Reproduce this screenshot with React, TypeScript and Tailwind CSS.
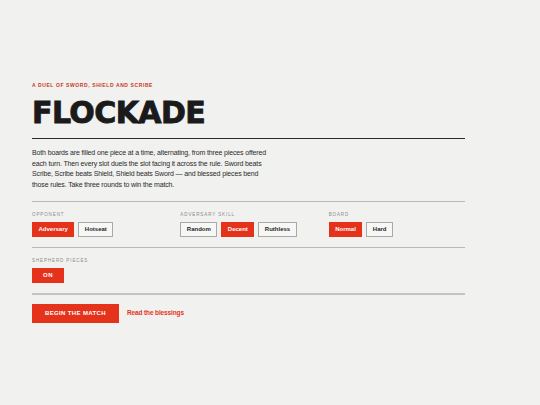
import { useState } from 'react'

type Option = { id: string; label: string }

const opponents: Option[] = [
  { id: 'adversary', label: 'Adversary' },
  { id: 'hotseat', label: 'Hotseat' },
]

const skills: Option[] = [
  { id: 'random', label: 'Random' },
  { id: 'decent', label: 'Decent' },
  { id: 'ruthless', label: 'Ruthless' },
]

const boards: Option[] = [
  { id: 'normal', label: 'Normal' },
  { id: 'hard', label: 'Hard' },
]

export default function App() {
  const [opponent, setOpponent] = useState('adversary')
  const [skill, setSkill] = useState('decent')
  const [board, setBoard] = useState('normal')
  const [shepherd, setShepherd] = useState(true)

  return (
    <div className="min-h-screen bg-[#f1f1f0] font-['Liberation_Sans',Arial,sans-serif] text-[#1b1b1b]">
      <div className="ml-8 w-[433px] pt-[82px]">
        <p className="text-[5px] font-bold uppercase leading-[6px] tracking-[0.12em] text-[#c9381f]">
          A duel of sword, shield and scribe
        </p>
        <h1 className="mt-[10px] font-['DejaVu_Sans',sans-serif] text-[30px] font-bold leading-[30px] tracking-[-0.02em] text-[#1a1a1a] [-webkit-text-stroke:0.9px_#1a1a1a]">
          FLOCKADE
        </h1>

        <div className="mt-[10px] border-t border-[#2a2a2a] pt-[9px]">
          <p className="max-w-[240px] text-[7px] leading-[10.7px] tracking-[-0.02em] text-[#2a2a2a]">
            Both boards are filled one piece at a time, alternating, from three pieces offered each turn. Then
            every slot duels the slot facing it across the rule. Sword beats Scribe, Scribe beats Shield, Shield
            beats Sword — and blessed pieces bend those rules. Take three rounds to win the match.
          </p>
        </div>

        <div className="mt-[10px] grid grid-cols-3 gap-x-3 border-t border-[#b9b9b9] pt-[10px] pb-[10px]">
          <Field title="Opponent" options={opponents} value={opponent} onChange={setOpponent} />
          <Field title="Adversary skill" options={skills} value={skill} onChange={setSkill} />
          <Field title="Board" options={boards} value={board} onChange={setBoard} />
        </div>

        <div className="border-t border-[#b9b9b9] pt-[10px] pb-[10px]">
          <FieldLabel>Shepherd pieces</FieldLabel>
          <button
            type="button"
            onClick={() => setShepherd((value) => !value)}
            className={getToggleClass(shepherd)}
          >
            {shepherd ? 'ON' : 'OFF'}
          </button>
        </div>

        <div className="flex items-center gap-2 border-t-2 border-[#c4c4c4] pt-[9px]">
          <button
            type="button"
            className="block h-[19px] w-[87px] bg-[#e5331b] text-[6px] font-bold uppercase tracking-[0.06em] text-white"
          >
            Begin the match
          </button>
          <a href="#" className="text-[6.5px] font-bold tracking-[-0.02em] text-[#e5331b]">
            Read the blessings
          </a>
        </div>
      </div>
    </div>
  )
}

function FieldLabel({ children }: { children: string }) {
  return (
    <p className="mb-[4px] text-[4.5px] uppercase leading-[6px] tracking-[0.2em] text-[#8a8a8a]">{children}</p>
  )
}

function Field({
  title,
  options,
  value,
  onChange,
}: {
  title: string
  options: Option[]
  value: string
  onChange: (id: string) => void
}) {
  return (
    <div>
      <FieldLabel>{title}</FieldLabel>
      <div className="flex gap-1">
        {options.map((option) => (
          <button
            key={option.id}
            type="button"
            onClick={() => onChange(option.id)}
            className={getOptionClass(option.id === value)}
          >
            {option.label}
          </button>
        ))}
      </div>
    </div>
  )
}

function getOptionClass(isActive: boolean) {
  if (isActive) return 'block h-[15px] border border-[#e5331b] bg-[#e5331b] px-[5.5px] text-[6px] font-bold text-white'
  return 'block h-[15px] border border-[#a9a9a9] bg-[#f7f7f6] px-[5.5px] text-[6px] font-bold text-[#1f1f1f]'
}

function getToggleClass(isActive: boolean) {
  if (isActive) return 'block h-[15px] w-[32px] bg-[#e5331b] text-[6px] font-bold tracking-[0.1em] text-white'
  return 'block h-[15px] w-[32px] border border-[#a9a9a9] bg-[#f7f7f6] text-[6px] font-bold tracking-[0.1em] text-[#1f1f1f]'
}
